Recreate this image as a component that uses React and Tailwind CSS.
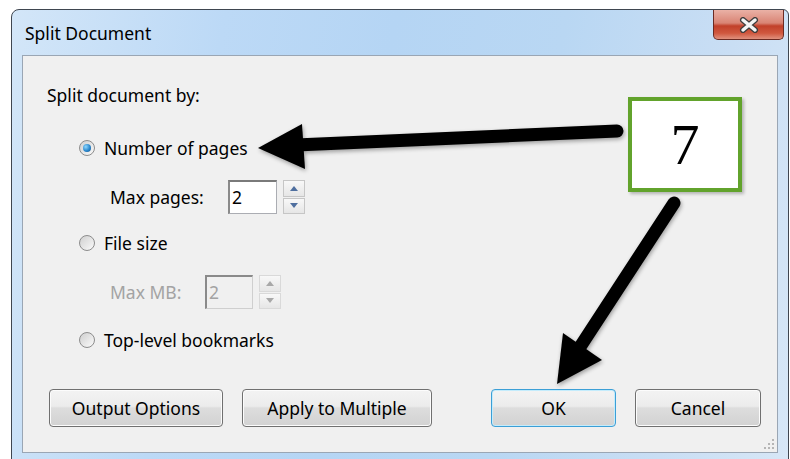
import React from "react";

const font = { fontFamily: '"Noto Sans", "Open Sans", Arial, sans-serif' };

function Radio({ checked, label }) {
  return (
    <div className="flex items-center h-[20px]">
      <div className="w-[16px] h-[16px] rounded-full border border-[#8c8c8c] bg-gradient-to-br from-[#cfcfcf] to-[#fbfbfb] flex items-center justify-center">
        {checked && (
          <div className="w-[8px] h-[8px] rounded-full bg-[radial-gradient(circle_at_35%_35%,#8fd8ff,#2a87cc_55%,#144e86)]" />
        )}
      </div>
      <span className="ml-[9px] text-[17.5px] text-black leading-[20px]">{label}</span>
    </div>
  );
}

function Spinner({ disabled }) {
  const tri = disabled ? "#a8a8a8" : "#4f6f9f";
  const bd = disabled ? "border-[#d9d9d9]" : "border-[#c6c6c6]";
  return (
    <div className="flex flex-col gap-[1px] w-[22px] h-[34px]">
      <div className={`flex-1 border ${bd} bg-gradient-to-b from-[#f8f8f8] to-[#e6e6e6] flex items-center justify-center`}>
        <svg width="8" height="5" viewBox="0 0 8 5"><path d="M0 5 L4 0 L8 5 Z" fill={tri} /></svg>
      </div>
      <div className={`flex-1 border ${bd} bg-gradient-to-b from-[#f8f8f8] to-[#e6e6e6] flex items-center justify-center`}>
        <svg width="8" height="5" viewBox="0 0 8 5"><path d="M0 0 L8 0 L4 5 Z" fill={tri} /></svg>
      </div>
    </div>
  );
}

function Btn({ children, w, primary }) {
  return (
    <div
      className={`h-[38px] rounded-[4px] border flex items-center justify-center text-[17.5px] text-black bg-[linear-gradient(#f3f3f3,#ececec_45%,#dddddd_50%,#d2d2d2)] ${
        primary
          ? "border-[#3c9fd6] shadow-[inset_0_0_0_1px_#c4ecfc]"
          : "border-[#707070] shadow-[inset_0_0_0_1px_#fcfcfc]"
      }`}
      style={{ width: w }}
    >
      {children}
    </div>
  );
}

export default function App() {
  return (
    <div className="relative w-[790px] h-[459px] bg-white overflow-hidden" style={font}>
      <div className="absolute left-[11px] top-[9px] w-[778px] h-[452px] rounded-tl-[8px] rounded-tr-[6px] border border-[#3f4650] bg-[linear-gradient(100deg,#d3e6f8_0%,#bcd9f6_25%,#b5d5f4_45%,#b9d7f3_65%,#c9def4_85%,#d7e7f7_100%)] flex flex-col">
        {/* title bar */}
        <div className="h-[45px] flex items-center pl-[13px] pt-[2px] relative">
          <span className="text-[17.5px] text-black">Split Document</span>
          <div className="absolute right-[4px] top-[0px] w-[71px] h-[30px] rounded-b-[5px] border border-t-0 border-[#6b2a22] bg-[linear-gradient(#eab1a6_0%,#d98474_45%,#c1402a_55%,#d0583f_80%,#e0917e_100%)] flex items-center justify-center">
            <svg width="22" height="16" viewBox="0 0 22 16">
              <path d="M5 3 L17 13 M17 3 L5 13" stroke="#3d3d3d" strokeWidth="6" strokeLinecap="round" />
              <path d="M5 3 L17 13 M17 3 L5 13" stroke="#f4f4f4" strokeWidth="3.5" strokeLinecap="round" />
            </svg>
          </div>
        </div>
        {/* client area */}
        <div className="relative mx-[10px] h-[398px] border border-[#9aa6b4] bg-[#f0f0f0] pl-[24px] pr-[16px] pt-[29px] flex flex-col">
          <div className="text-[17.5px] leading-[20px] text-black">Split document by:</div>

          <div className="ml-[32px] mt-[33px]">
            <Radio checked label="Number of pages" />
          </div>
          <div className="ml-[63px] mt-[22px] flex items-center">
            <span className="text-[17.5px] text-black w-[118px]">Max pages:</span>
            <div className="w-[49px] h-[34px] border border-[#abadb3] border-t-[#7a7a7a] border-l-[#8a8a8a] border-t-2 border-l-2 bg-white flex items-center pl-[2px] text-[17.5px] text-black">2</div>
            <div className="ml-[6px]"><Spinner /></div>
          </div>

          <div className="ml-[32px] mt-[19px]">
            <Radio label="File size" />
          </div>
          <div className="ml-[63px] mt-[22px] flex items-center">
            <span className="text-[17.5px] text-[#a3a3a3] w-[95px]">Max MB:</span>
            <div className="w-[48px] h-[34px] border border-[#cfcfcf] border-t-[#8a8a8a] border-l-[#8a8a8a] border-t-2 border-l-2 bg-[#f0f0f0] flex items-center pl-[2px] text-[17.5px] text-[#a3a3a3]">2</div>
            <div className="ml-[6px]"><Spinner disabled /></div>
          </div>

          <div className="ml-[32px] mt-[21px]">
            <Radio label="Top-level bookmarks" />
          </div>

          <div className="mt-[39px] flex items-center ml-[2px]">
            <Btn w="174px">Output Options</Btn>
            <div className="ml-[19px]"><Btn w="190px">Apply to Multiple</Btn></div>
            <div className="ml-[59px]"><Btn w="125px" primary>OK</Btn></div>
            <div className="ml-[19px]"><Btn w="126px">Cancel</Btn></div>
          </div>

          {/* size grip */}
          <svg className="absolute right-[2px] bottom-[2px]" width="12" height="12" viewBox="0 0 12 12">
            {[[9, 1], [9, 5], [5, 5], [9, 9], [5, 9], [1, 9]].map(([x, y], i) => (
              <rect key={i} x={x} y={y} width="2" height="2" fill="#b5b5b5" />
            ))}
          </svg>
        </div>
      </div>

      {/* callout number */}
      <div className="absolute left-[628px] top-[97px] w-[114px] h-[95px] border-[4px] border-[#62a32c] bg-white flex items-center justify-center shadow-[2px_2px_3px_rgba(0,0,0,0.25)]">
        <span className="text-[58px] leading-none text-black" style={{ fontFamily: '"Liberation Serif", "Times New Roman", serif' }}>7</span>
      </div>

      {/* annotation arrows */}
      <svg className="absolute inset-0 pointer-events-none" width="790" height="459" viewBox="0 0 790 459">
        <defs>
          <filter id="sh" x="-10%" y="-10%" width="130%" height="130%">
            <feGaussianBlur in="SourceAlpha" stdDeviation="2" />
            <feOffset dx="1" dy="2" result="b" />
            <feComponentTransfer><feFuncA type="linear" slope="0.35" /></feComponentTransfer>
            <feMerge><feMergeNode /><feMergeNode in="SourceGraphic" /></feMerge>
          </filter>
        </defs>
        <g filter="url(#sh)">
          <path d="M296 145 L617 131" stroke="#000" strokeWidth="13" strokeLinecap="round" />
          <path d="M258 148 L302 124 L305 169 Z" fill="#000" />
          <path d="M674 203 L580 347" stroke="#000" strokeWidth="13" strokeLinecap="round" />
          <path d="M557 384 L563 333 L602 360 Z" fill="#000" />
        </g>
      </svg>
    </div>
  );
}
